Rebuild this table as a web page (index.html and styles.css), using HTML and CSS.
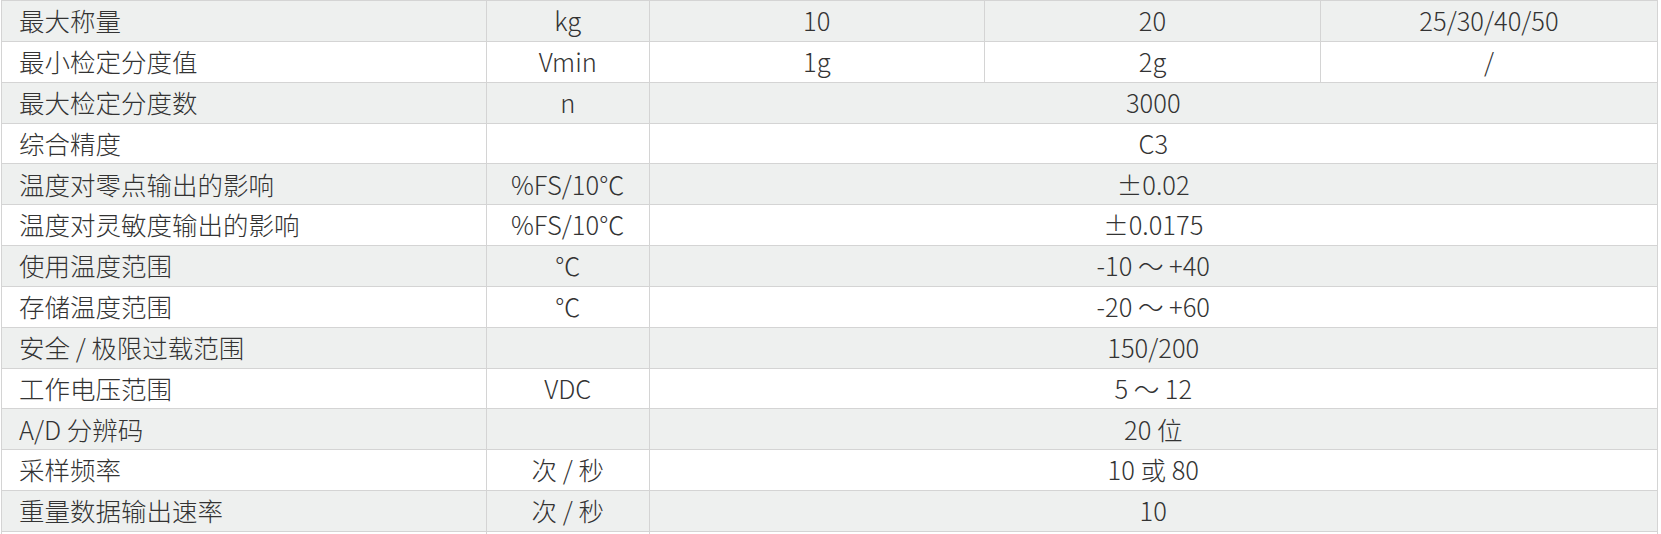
FILE: index.html
```html
<!DOCTYPE html>
<html lang="zh-CN">
<head>
<meta charset="utf-8">
<title>规格参数</title>
<link rel="stylesheet" href="styles.css">
</head>
<body>
<div class="spec">
  <div class="row alt">
    <div class="cell name">最大称量</div>
    <div class="cell">kg</div>
    <div class="cell">10</div>
    <div class="cell">20</div>
    <div class="cell">25/30/40/50</div>
  </div>
  <div class="row">
    <div class="cell name">最小检定分度值</div>
    <div class="cell">Vmin</div>
    <div class="cell">1g</div>
    <div class="cell">2g</div>
    <div class="cell">/</div>
  </div>
  <div class="row alt">
    <div class="cell name">最大检定分度数</div>
    <div class="cell">n</div>
    <div class="cell wide">3000</div>
  </div>
  <div class="row">
    <div class="cell name">综合精度</div>
    <div class="cell"></div>
    <div class="cell wide">C3</div>
  </div>
  <div class="row alt">
    <div class="cell name">温度对零点输出的影响</div>
    <div class="cell">%FS/10℃</div>
    <div class="cell wide">±0.02</div>
  </div>
  <div class="row">
    <div class="cell name">温度对灵敏度输出的影响</div>
    <div class="cell">%FS/10℃</div>
    <div class="cell wide">±0.0175</div>
  </div>
  <div class="row alt">
    <div class="cell name">使用温度范围</div>
    <div class="cell">℃</div>
    <div class="cell wide">-10 ～ +40</div>
  </div>
  <div class="row">
    <div class="cell name">存储温度范围</div>
    <div class="cell">℃</div>
    <div class="cell wide">-20 ～ +60</div>
  </div>
  <div class="row alt">
    <div class="cell name">安全 / 极限过载范围</div>
    <div class="cell"></div>
    <div class="cell wide">150/200</div>
  </div>
  <div class="row">
    <div class="cell name">工作电压范围</div>
    <div class="cell">VDC</div>
    <div class="cell wide">5 ～ 12</div>
  </div>
  <div class="row alt">
    <div class="cell name">A/D 分辨码</div>
    <div class="cell"></div>
    <div class="cell wide">20 位</div>
  </div>
  <div class="row">
    <div class="cell name">采样频率</div>
    <div class="cell">次 / 秒</div>
    <div class="cell wide">10 或 80</div>
  </div>
  <div class="row alt">
    <div class="cell name">重量数据输出速率</div>
    <div class="cell">次 / 秒</div>
    <div class="cell wide">10</div>
  </div>
  <div class="row">
    <div class="cell name"></div>
    <div class="cell"></div>
    <div class="cell wide"></div>
  </div>
</div>
</body>
</html>
```

FILE: styles.css
```css
html, body {
  margin: 0;
  padding: 0;
  background: #ffffff;
}

body {
  padding-left: 1px;
  font-family: "Noto Sans CJK SC", "Noto Sans", sans-serif;
  color: #333333;
}

.spec {
  display: grid;
  grid-template-columns: 484px 161.5px 334.5px 335px 336px;
  grid-auto-rows: 39.85px;
  gap: 1px;
  width: fit-content;
  background: #d4d4d4;
  border: 1px solid #d4d4d4;
}

.row {
  display: contents;
}

.cell {
  display: flex;
  align-items: center;
  justify-content: center;
  padding-bottom: 2px;
  background: #ffffff;
  font-size: 25.5px;
  font-weight: 300;
  line-height: 1;
  white-space: nowrap;
}

.row.alt .cell {
  background: #eef0ef;
}

.cell.name {
  justify-content: flex-start;
  padding-left: 17px;
}

.cell.wide {
  grid-column: span 3;
}
```
